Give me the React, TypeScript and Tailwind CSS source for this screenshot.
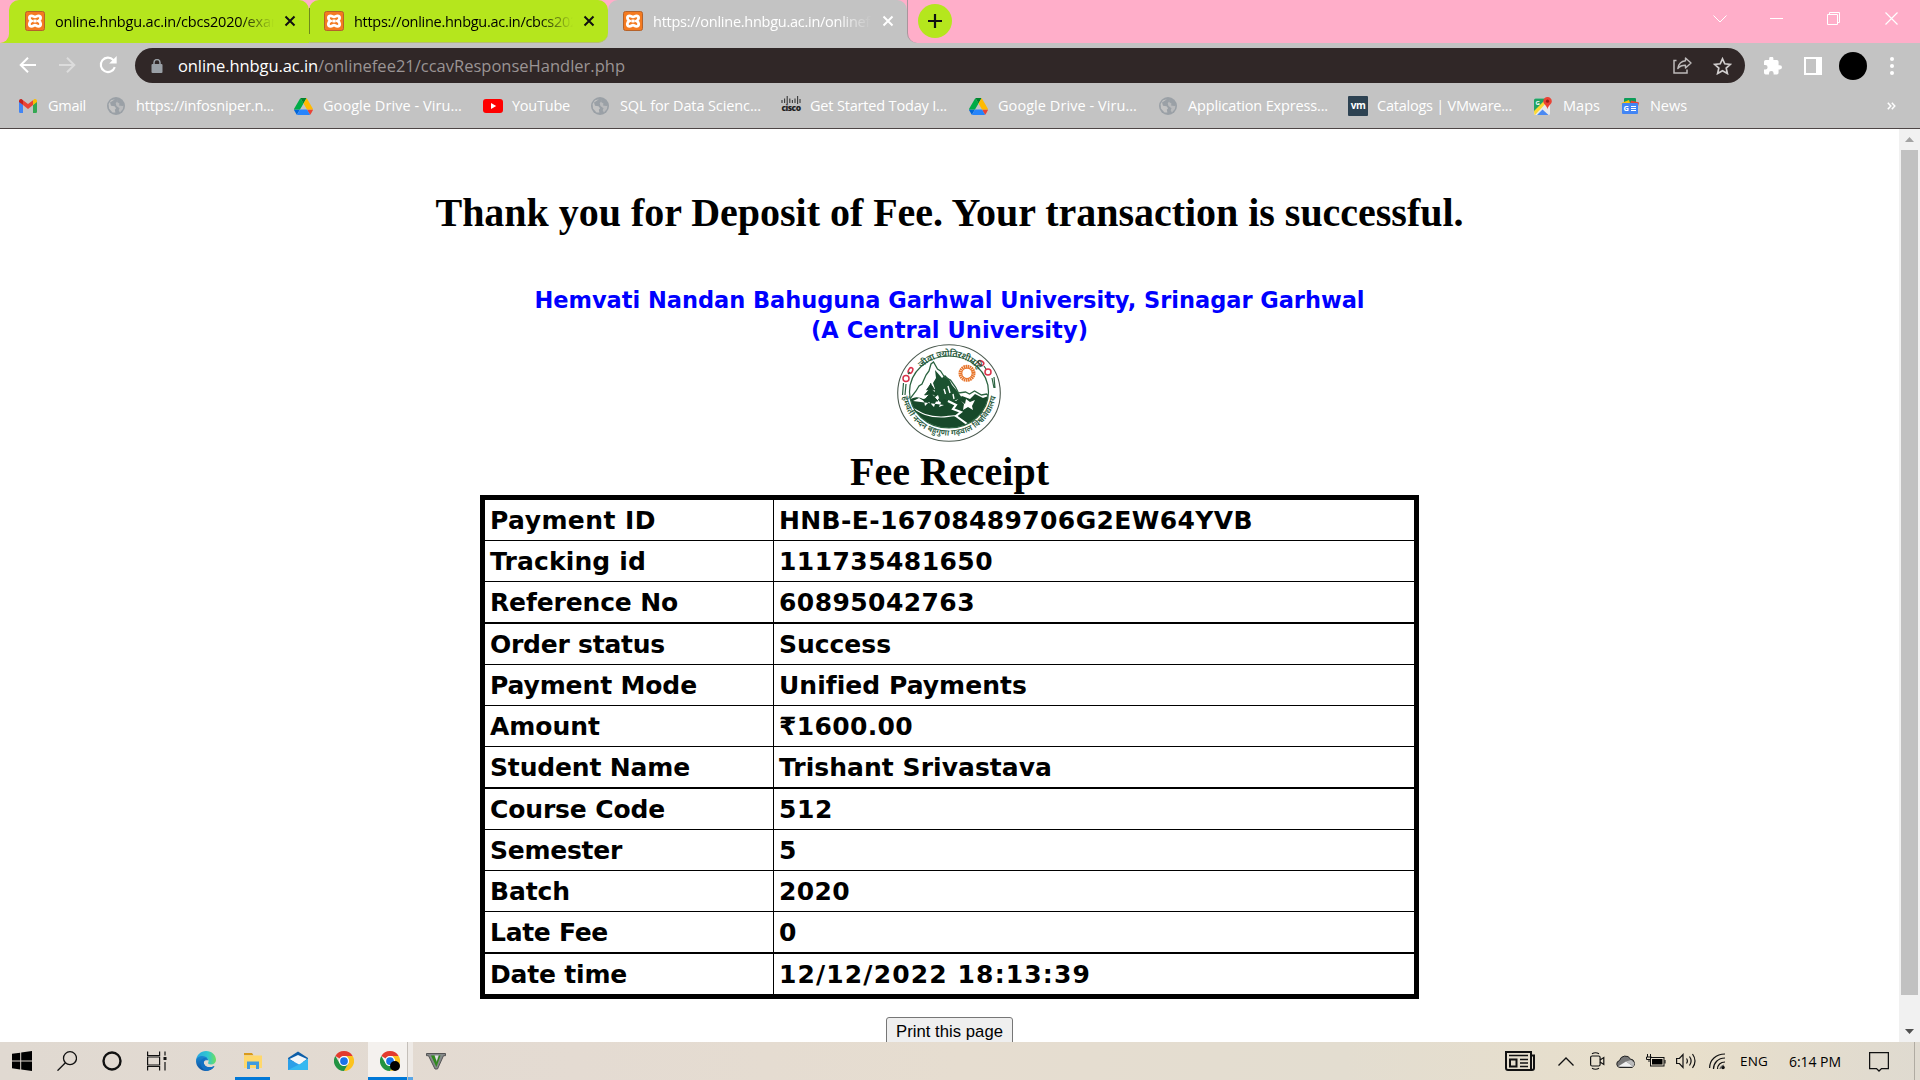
import { useLayoutEffect, useRef, useState, type ReactNode } from "react";

const UI = "font-['Open_Sans','Noto_Sans',sans-serif]";

/** A single line of text whose tracking is adjusted so that it spans `w` pixels. */
function Fit({ w, className = "", children }: { w: number; className?: string; children: string }) {
  const ref = useRef<HTMLSpanElement>(null);
  const [spacing, setSpacing] = useState(0);
  useLayoutEffect(() => {
    if (ref.current) {
      const natural = ref.current.getBoundingClientRect().width;
      setSpacing((w - natural) / children.length);
    }
  }, [w, children]);
  return (
    <span ref={ref} className={`inline-block shrink-0 whitespace-pre ${className}`} style={{ letterSpacing: `${spacing}px` }}>
      {children}
    </span>
  );
}

function Xampp() {
  return (
    <svg viewBox="0 0 20 20" className="size-5 shrink-0">
      <rect x="0.5" y="0.5" width="19" height="19" rx="2" fill="#f47a20" stroke="#b5622a" />
      <path
        d="M6.600 4.800c-1.700 0-2.200 1-2.200 2.200 0 1.500.9 2.400 2 3-1.200.6-2.100 1.500-2.100 3 0 1.400.8 2.300 2.300 2.300 1.700 0 2-1.100 3.400-1.100s1.700 1.100 3.400 1.100c1.500 0 2.300-.9 2.300-2.300 0-1.500-.9-2.400-2.100-3 1.100-.6 2-1.500 2-3 0-1.200-.5-2.200-2.200-2.200-1.500 0-2 1.100-3.400 1.100S8.100 4.800 6.600 4.800Z"
        fill="none"
        stroke="#fff"
        strokeWidth="2.800"
      />
      <path d="M8.500 10h3" stroke="#fff" strokeWidth="3" />
    </svg>
  );
}

function Cross({ color }: { color: string }) {
  return (
    <svg viewBox="0 0 12 12" className="size-3 shrink-0">
      <path d="M1.500 1.500 10.500 10.500M10.500 1.500 1.500 10.500" stroke={color} strokeWidth="2" />
    </svg>
  );
}

function TabBody({ title, w, dark, textBox }: { title: string; w: number; dark: boolean; textBox: string }) {
  return (
    <>
      <Xampp />
      <div className={`ml-[10px] overflow-hidden [mask-image:linear-gradient(90deg,#000_84%,transparent)] ${textBox}`}>
        <Fit w={w} className={dark ? "text-[14.500px] text-black" : "text-[14.500px] text-white"}>
          {title}
        </Fit>
      </div>
      <div className="ml-[10px] flex">
        <Cross color={dark ? "#111" : "#fff"} />
      </div>
    </>
  );
}

function Globe() {
  return (
    <svg viewBox="0 0 18 18" className="size-[18px]">
      <circle cx="9" cy="9" r="9" fill="#9aa0a6" />
      <path d="M8 2.200 3 5.500l1 3.200 3.500.6 1.600 2-1.300 1.500.6 2.800-2.900-.2L2 11.500 1.600 7 4 3.200Z" fill="#c3c3c3" />
      <path d="M11 1.800 10 5l2.500 1.500-.5 2L15.500 9l1-.5-.6 3.500-3 3.500-1.200-2.200.8-2L9.500 9l-.8-2.500 1.200-2Z" fill="#c3c3c3" opacity=".75" />
    </svg>
  );
}

function Drive() {
  return (
    <svg viewBox="0 0 87.300 78" className="h-[17px] w-[19px]">
      <path d="m6.600 66.850 3.850 6.650c.8 1.400 1.950 2.500 3.300 3.300l13.750-23.800H0c0 1.550.4 3.100 1.200 4.500z" fill="#0066da" />
      <path d="M43.650 25 29.900 1.200c-1.350.8-2.500 1.900-3.300 3.300L1.200 48.500A9 9 0 0 0 0 53h27.500z" fill="#00ac47" />
      <path d="M73.550 76.800c1.350-.8 2.500-1.900 3.300-3.300l1.600-2.750 7.650-13.250c.8-1.400 1.200-2.950 1.200-4.500H59.800l5.850 11.500z" fill="#ea4335" />
      <path d="M43.650 25 57.400 1.200C56.050.4 54.500 0 52.900 0H34.400c-1.600 0-3.150.45-4.500 1.200z" fill="#00832d" />
      <path d="M59.800 53H27.500L13.750 76.800c1.350.8 2.900 1.200 4.500 1.200h50.800c1.600 0 3.150-.45 4.500-1.200z" fill="#2684fc" />
      <path d="m73.400 26.500-12.700-22c-.8-1.400-1.950-2.500-3.300-3.300L43.650 25l16.150 28h27.450c0-1.550-.4-3.100-1.200-4.500z" fill="#ffba00" />
    </svg>
  );
}

function Gmail() {
  return (
    <svg viewBox="0 0 18 14" className="h-[14px] w-[18px]">
      <path d="M0 2v10.800A1.200 1.200 0 0 0 1.200 14H4V6Z" fill="#4285f4" />
      <path d="M18 2v10.800a1.200 1.200 0 0 1-1.200 1.200H14V6Z" fill="#34a853" />
      <path d="M4 1.200 9 5l5-3.800V6L9 9.900 4 6Z" fill="#ea4335" />
      <path d="M0 2C0 .4 1.800-.5 3.100.5L4 1.200V6L0 3Z" fill="#c5221f" />
      <path d="M18 2c0-1.600-1.800-2.500-3.100-1.500L14 1.200V6l4-3Z" fill="#fbbc04" />
    </svg>
  );
}

function YouTube() {
  return (
    <svg viewBox="0 0 20 14" className="h-[14px] w-5">
      <rect width="20" height="14" rx="3" fill="#f00" />
      <path d="M8 4v6l5.200-3Z" fill="#fff" />
    </svg>
  );
}

function Cisco() {
  return (
    <div className="mb-1 flex h-[16px] w-5 flex-col items-center">
      <svg viewBox="0 0 20 8" className="h-2 w-5">
        <path d="M1 4v3M3.600 2.500V7M6.200 0v8M8.800 2.500V7M11.400 4v3M14 2.500V7M16.600 0v8M19 3v4" stroke="#3a3a3a" strokeWidth="1.100" />
      </svg>
      <span className="font-['Open_Sans',sans-serif] text-[8.500px] leading-[7px] font-extrabold tracking-[-0.500px] text-[#222]">cisco</span>
    </div>
  );
}

function VMware() {
  return (
    <div className="flex h-5 w-5 items-center justify-center rounded-[1px] bg-[#2d4252]">
      <span className="-mt-[2px] text-[10px] leading-none font-bold tracking-[-0.500px] text-white">vm</span>
    </div>
  );
}

function Maps() {
  return (
    <svg viewBox="0 0 18 19" className="h-[19px] w-[18px]">
      <rect x="0" y="1.500" width="16" height="16.500" rx="1.500" fill="#e8eaed" />
      <path d="M0 3q0-1.500 1.500-1.500H13L0 15Z" fill="#1fa463" />
      <path d="M0 14 12 2l3 1L1 18H.5Z" fill="#fdd835" />
      <path d="m3 18 5.500-5.500L14.500 18Z" fill="#4a89f3" />
      <text x="1.500" y="8" fontSize="6" fontWeight="700" fill="#fff" fontFamily="Open Sans">G</text>
      <path d="M13.500 0A4.200 4.200 0 0 0 9.300 4.200c0 3 3.400 3.800 4.200 8 .8-4.200 4.300-5 4.300-8A4.200 4.200 0 0 0 13.500 0Z" fill="#ea4335" />
      <circle cx="13.500" cy="4.200" r="1.600" fill="#9c1f17" />
    </svg>
  );
}

function News() {
  return (
    <svg viewBox="0 0 18 16" className="h-4 w-[18px]">
      <rect x="3" y="0" width="12" height="8" rx="1" fill="#0c9d58" />
      <path d="M.5 5 8 2l2 6-8 3Z" fill="#ffc107" />
      <path d="m10 2.500 8 2-2 8-8-3Z" fill="#ea4335" />
      <rect x="1" y="5" width="16" height="11" rx="1" fill="#4285f4" />
      <text x="2.500" y="13" fontSize="7.500" fontWeight="700" fill="#fff" fontFamily="Open Sans">G</text>
      <path d="M10 8.500h5M10 10.500h5M10 12.500h5" stroke="#fff" strokeWidth="1" />
    </svg>
  );
}

const bookmarks: { icon: ReactNode; label: string; w: number; box: string }[] = [
  { icon: <Gmail />, label: "Gmail", w: 38, box: "w-[88px]" },
  { icon: <Globe />, label: "https://infosniper.n...", w: 138, box: "w-[187px]" },
  { icon: <Drive />, label: "Google Drive - Viru...", w: 139, box: "w-[189px]" },
  { icon: <YouTube />, label: "YouTube", w: 58, box: "w-[108px]" },
  { icon: <Globe />, label: "SQL for Data Scienc...", w: 141, box: "w-[190px]" },
  { icon: <Cisco />, label: "Get Started Today I...", w: 137, box: "w-[188px]" },
  { icon: <Drive />, label: "Google Drive - Viru...", w: 139, box: "w-[190px]" },
  { icon: <Globe />, label: "Application Express...", w: 140, box: "w-[189px]" },
  { icon: <VMware />, label: "Catalogs | VMware...", w: 135, box: "w-[186px]" },
  { icon: <Maps />, label: "Maps", w: 37, box: "w-[87px]" },
  { icon: <News />, label: "News", w: 37, box: "w-[87px]" },
];

function TabStrip() {
  return (
    <div className="flex h-[43px] bg-[#ffaec9]">
      <div className="w-[9px] bg-[#b5e61d]">
        <div className="h-full rounded-br-[9px] bg-[#ffaec9]" />
      </div>
      <div className="flex w-[300px] items-center rounded-t-[10px] bg-[#b5e61d] pb-[2px] pl-4">
        <TabBody title="online.hnbgu.ac.in/cbcs2020/exam" w={229} dark textBox="w-[219px]" />
      </div>
      <div className="w-[299px] bg-[linear-gradient(#ffaec9_50%,#c3c3c3_50%)]">
        <div className="flex h-full items-center rounded-t-[10px] rounded-br-[10px] border-b border-[#b5c070] bg-[#b5e61d] pb-px">
          <div className="h-[26px] w-px bg-[#6f8a1c]" />
          <div className="w-[14px]" />
          <TabBody title="https://online.hnbgu.ac.in/cbcs2020" w={232} dark textBox="w-[219px]" />
        </div>
      </div>
      <div className="flex w-[299px] items-center rounded-t-[10px] bg-[#c3c3c3] pb-[2px] pl-[15px]">
        <TabBody title="https://online.hnbgu.ac.in/onlinefe" w={225} dark={false} textBox="w-[219px]" />
      </div>
      <div className="flex-1 bg-[#c3c3c3]">
        <div className="flex h-full items-start rounded-bl-[10px] border-l border-[#a9959c] bg-[#ffaec9]">
          <div className="mt-1 ml-[10px] flex size-[34px] items-center justify-center rounded-full bg-[#b5e61d]">
            <svg viewBox="0 0 16 16" className="size-4">
              <path d="M8 1v14M1 8h14" stroke="#111" strokeWidth="2.200" />
            </svg>
          </div>
          <div className="mr-[22px] ml-auto flex h-[37px] items-center text-white">
            <svg viewBox="0 0 14 8" className="mr-[43px] h-2 w-[14px]">
              <path d="m.5.5 6.500 6.500L13.500.5" fill="none" stroke="currentColor" strokeWidth="1" />
            </svg>
            <div className="mr-[44px] h-px w-[13px] bg-white" />
            <svg viewBox="0 0 13 13" className="mr-[45px] size-[13px]">
              <path d="M.5 2.500h10v10H.5ZM2.500 2.500v-2h10v10h-2" fill="none" stroke="currentColor" />
            </svg>
            <svg viewBox="0 0 13 13" className="size-[13px]">
              <path d="m.5.5 12 12M12.500.5l-12 12" stroke="currentColor" strokeWidth="1.200" />
            </svg>
          </div>
        </div>
      </div>
    </div>
  );
}

function Toolbar() {
  return (
    <div className="flex h-[45px] items-center pl-[19px]">
      <svg viewBox="0 0 17 16" className="mb-[1px] h-4 w-[17px]">
        <path d="M17 8H2M9 .8 1.700 8 9 15.200" fill="none" stroke="#fff" strokeWidth="2" />
      </svg>
      <svg viewBox="0 0 17 16" className="mb-[1px] ml-[23px] h-4 w-[17px]">
        <path d="M0 8h15M8 .8 15.300 8 8 15.200" fill="none" stroke="#dcdcdc" strokeWidth="2" />
      </svg>
      <svg viewBox="0 0 18 18" className="mb-[1px] ml-[23px] size-[18px]">
        <path d="M15.800 11.200A7.200 7.200 0 1 1 14.300 4L16 5.800" fill="none" stroke="#fff" strokeWidth="2.100" />
        <path d="M17.700 0v7.500h-7.500Z" fill="#fff" />
      </svg>
      <div className="ml-[18px] flex h-[35px] w-[1610px] items-center rounded-full bg-[#302727] pl-4">
        <svg viewBox="0 0 12 14" className="h-[14px] w-3">
          <rect x="0.500" y="5" width="11" height="9" rx="1" fill="#9aa0a6" />
          <path d="M3 5.500V3.600a3 3 0 0 1 6 0v1.900" fill="none" stroke="#9aa0a6" strokeWidth="1.500" />
        </svg>
        <div className="ml-[15px] flex text-[16.500px] leading-[24px]">
          <Fit w={140} className="text-white">online.hnbgu.ac.in</Fit>
          <Fit w={307} className="text-[#9a9494]">/onlinefee21/ccavResponseHandler.php</Fit>
        </div>
        <svg viewBox="0 0 19 17" className="mr-[21px] ml-auto h-[17px] w-[19px] text-[#bdbaba]">
          <path d="M3.500 3.500H1V16h13v-3.500" fill="none" stroke="currentColor" strokeWidth="1.500" />
          <path d="M12.500 1 18 6l-5.500 5V8.300c-3.500 0-5.800.8-7.700 3.200C5.500 7.500 8 4.300 12.500 3.800Z" fill="none" stroke="currentColor" strokeWidth="1.400" strokeLinejoin="round" />
        </svg>
        <svg viewBox="0 0 19 18" className="mr-[13px] h-[18px] w-[19px]">
          <path d="m9.500 1.800 2.300 5 5.500.6-4.100 3.700 1.200 5.400-4.900-2.800-4.900 2.800 1.200-5.400L1.700 7.400l5.500-.6Z" fill="none" stroke="#d0cdcd" strokeWidth="1.700" />
        </svg>
      </div>
      <svg viewBox="2 2 21 20" className="ml-[19px] h-[18px] w-[18px]">
        <path d="M20.500 11H19V7a2 2 0 0 0-2-2h-4V3.500a2.500 2.500 0 0 0-5 0V5H4a2 2 0 0 0-2 2v3.800h1.500a2.700 2.700 0 0 1 0 5.400H2V20a2 2 0 0 0 2 2h3.800v-1.500a2.700 2.700 0 0 1 5.400 0V22H17a2 2 0 0 0 2-2v-4h1.500a2.500 2.500 0 0 0 0-5Z" fill="#fff" />
      </svg>
      <div className="ml-[22px] h-[18px] w-[18px] border-2 border-r-[6px] border-white" />
      <div className="ml-[17px] size-7 rounded-full bg-black" />
      <div className="ml-[23px] flex flex-col gap-[3px]">
        <div className="size-1 rounded-full bg-white" />
        <div className="size-1 rounded-full bg-white" />
        <div className="size-1 rounded-full bg-white" />
      </div>
    </div>
  );
}

function Bookmarks() {
  return (
    <div className="flex h-9 items-center pl-[19px] text-[14.500px] text-white">
      {bookmarks.map((b, i) => (
        <div key={i} className={`flex shrink-0 items-center ${b.box}`}>
          <div className="flex w-5 items-center">{b.icon}</div>
          <Fit w={b.w} className="ml-[9px]">{b.label}</Fit>
        </div>
      ))}
      <svg viewBox="0 0 9 8" className="mr-6 ml-auto h-2 w-[9px]">
        <path d="m.8.800 3 3.200-3 3.200M4.800.8l3 3.200-3 3.200" fill="none" stroke="#fff" strokeWidth="1.500" />
      </svg>
    </div>
  );
}

function Seal() {
  return (
    <svg viewBox="0 0 104 98" className="-mt-px mr-[2px] h-[98px] w-[104px] shrink-0">
      <defs>
        <clipPath id="inner"><ellipse cx="52" cy="48" rx="39.500" ry="36" /></clipPath>
        <path id="topArc" d="M15 49a37 35.500 0 0 1 74 0" transform="translate(0 -1)" />
        <path id="bottomArc" d="M4 42C6 108 98 108 100 42" />
      </defs>
      <ellipse cx="52" cy="49" rx="51.300" ry="48.300" fill="#fff" stroke="#4c5b50" strokeWidth="1.100" />
      <g clipPath="url(#inner)">
        <path d="M12 56c6-4 10-3 14-1l6-1 7 2 6-3 9 1 5 3 6-5 8 3 5-5 8 4 8-3v36H12Z" fill="#17492a" />
        <path d="m38 26 7 8 3-3 4 4 3 6 6 7 4 6-9 3-3 5-5-7-5 2-2-6-4 3 1-9-2-6 3-5Z" fill="#1b5230" />
        <path d="m47 45 1.500 5M51 42l2 7M56 50l1 5M40 55l3 5" stroke="#fff" strokeWidth="1.400" />
        <path d="m12 56 7-9 3-5 3-2 4-9 3-4 2-7 2.500-2 4 7 3 2 4 6 6 3 5 7 3 6 7-1 4 2 5-3 7 4 5-1 3 3" fill="none" stroke="#2b6340" strokeWidth="1.300" />
        <path d="m16 57 6-3 5 3 1 5 4-4 5 5 2-6 5 1-2 5 5-2M64 57l4 3 1-5 4 3 5-2-3 6 1 4-5-3-5 3 1-6Z" fill="#fff" />
        <path d="M33.700 39v22M33.700 40l-4 6 3-1-5 6 5-1-6 7h14l-6-7 5 1-5-6 3 1Z" fill="#17492a" stroke="#17492a" strokeWidth="1" />
        <path d="m51 57 8 4-3 4 8 3-5 4 18 13" fill="none" stroke="#fff" strokeWidth="2.100" />
        <path d="M14 63c10 6 16 10 30 10 7 0 10-2 16-1" fill="none" stroke="#fff" strokeWidth="1.200" />
      </g>
      <ellipse cx="52" cy="48" rx="39.500" ry="36" fill="none" stroke="#2b6340" strokeWidth="1.200" />
      <circle cx="70" cy="29.300" r="6.700" fill="#fff" stroke="#e8762c" strokeWidth="3.600" strokeDasharray="1.500 .5" />
      <circle cx="70" cy="29.300" r="5.200" fill="none" stroke="#e8762c" strokeWidth="1" />
      <g fill="none" stroke="#d8334a" strokeWidth="1.500">
        <circle cx="9" cy="34.500" r="3" />
        <ellipse cx="13.500" cy="26.500" rx="2" ry="3" transform="rotate(30 13.500 26.500)" />
        <ellipse cx="84" cy="19" rx="2" ry="3" transform="rotate(-60 84 19)" />
        <circle cx="91" cy="28" r="3" />
      </g>
      <path d="M6.500 39 5.500 51M9 40 8 51M95 34l2 10M97 33l1 11M11 30l2-2M87 22l2 3" stroke="#2b6340" strokeWidth="1.200" />
      <g fill="#24573a" fontFamily="'Noto Sans Devanagari','Noto Sans',sans-serif" fontWeight="600">
        <text fontSize="9"><textPath href="#topArc" startOffset="51%" textAnchor="middle" textLength="64">जीवा ज्योतिरशीमहि</textPath></text>
        <text fontSize="8"><textPath href="#bottomArc" startOffset="50%" textAnchor="middle" textLength="132">हेमवती नन्दन बहुगुणा गढ़वाल विश्वविद्यालय</textPath></text>
      </g>
    </svg>
  );
}

const rows: { label: string; lw: number; value: string; vw: number; cls: string }[] = [
  { label: "Payment ID", lw: 166, value: "HNB-E-16708489706G2EW64YVB", vw: 474, cls: "h-[41px] border-b" },
  { label: "Tracking id", lw: 156, value: "111735481650", vw: 214, cls: "h-[41px] border-b" },
  { label: "Reference No", lw: 188, value: "60895042763", vw: 196, cls: "h-[42px] border-b-2" },
  { label: "Order status", lw: 175, value: "Success", vw: 112, cls: "h-[41px] border-b" },
  { label: "Payment Mode", lw: 207, value: "Unified Payments", vw: 247, cls: "h-[41px] border-b" },
  { label: "Amount", lw: 110, value: "₹1600.00", vw: 134, cls: "h-[41px] border-b" },
  { label: "Student Name", lw: 200, value: "Trishant Srivastava", vw: 273, cls: "h-[42px] border-b-2" },
  { label: "Course Code", lw: 175, value: "512", vw: 54, cls: "h-[41px] border-b" },
  { label: "Semester", lw: 132, value: "5", vw: 18, cls: "h-[41px] border-b" },
  { label: "Batch", lw: 80, value: "2020", vw: 71, cls: "h-[41px] border-b" },
  { label: "Late Fee", lw: 118, value: "0", vw: 18, cls: "h-[42px] border-b-2" },
  { label: "Date time", lw: 137, value: "12/12/2022 18:13:39", vw: 312, cls: "h-[40px]" },
];

function Receipt() {
  return (
    <div className="flex h-[913px] bg-white">
      <main className="flex w-[1899px] flex-col items-center overflow-hidden text-black">
        <h1 className="mt-[61px] h-[46px] shrink-0 font-['Liberation_Serif','Times_New_Roman',serif] text-[40px] leading-[46px] font-bold">
          <Fit w={1028}>Thank you for Deposit of Fee. Your transaction is successful.</Fit>
        </h1>
        <div className="mt-[49px] flex shrink-0 flex-col items-center font-['DejaVu_Sans',Verdana,sans-serif] text-[22.500px] leading-[30px] font-bold text-[#00f]">
          <Fit w={830}>Hemvati Nandan Bahuguna Garhwal University, Srinagar Garhwal</Fit>
          <Fit w={277}>(A Central University)</Fit>
        </div>
        <Seal />
        <h2 className="mt-[7px] flex h-[46px] shrink-0 font-['Liberation_Serif','Times_New_Roman',serif] text-[40px] leading-[46px] font-bold">
          <Fit w={199}>Fee Receipt</Fit>
        </h2>
        <div className="w-[939px] shrink-0 border-[5px] border-black font-['DejaVu_Sans',Verdana,sans-serif] text-[25px] leading-[42px] font-bold">
          {rows.map((r) => (
            <div key={r.label} className={`flex border-black ${r.cls}`}>
              <div className="w-[289px] border-r border-black pl-[5px]">
                <Fit w={r.lw}>{r.label}</Fit>
              </div>
              <div className="pl-[5px]">
                <Fit w={r.vw}>{r.value}</Fit>
              </div>
            </div>
          ))}
        </div>
        <button className="mt-[18px] h-[28px] w-[127px] shrink-0 rounded-[3px] border border-[#767676] bg-[#efefef] font-['Liberation_Sans',Arial,sans-serif] text-[16.670px] leading-[25px]">
          <Fit w={107}>Print this page</Fit>
        </button>
      </main>
      <aside className="flex w-[21px] flex-col items-center bg-[#f1f1f1]">
        <div className="flex h-[21px] items-center">
          <svg viewBox="0 0 9 5" className="h-[5px] w-[9px]"><path d="M0 5 4.500 0 9 5Z" fill="#a3a3a3" /></svg>
        </div>
        <div className="h-[845px] w-[17px] bg-[#c1c1c1]" />
        <div className="mt-auto mb-[8px]">
          <svg viewBox="0 0 9 5" className="h-[5px] w-[9px]"><path d="M0 0 4.500 5 9 0Z" fill="#505050" /></svg>
        </div>
      </aside>
    </div>
  );
}

function Chrome() {
  return (
    <svg viewBox="0 0 48 48" className="size-5">
      <path d="M24 0a24 24 0 0 1 20.800 12H24a12 12 0 0 0-10.400 6L3.200 12A24 24 0 0 1 24 0Z" fill="#e33b2e" />
      <path d="M44.800 12A24 24 0 0 1 24 48l10.400-18A12 12 0 0 0 34.400 18L30 12Z" fill="#fcc31e" />
      <path d="M3.200 12 13.600 30a12 12 0 0 0 20.800 0L24 48A24 24 0 0 1 3.200 12Z" fill="#229342" />
      <circle cx="24" cy="24" r="12" fill="#fff" />
      <circle cx="24" cy="24" r="9.300" fill="#1a73e8" />
    </svg>
  );
}

function Taskbar() {
  return (
    <div className="flex h-[38px] items-center bg-[linear-gradient(90deg,#e0d9d1,#e4dbd2_30%,#e6ddd0_50%,#e3ddd0_70%,#e8dfcb_88%,#dfdad0)] pl-3">
      <svg viewBox="0 0 20 20" className="size-5">
        <path d="m0 2.800 8.200-1.100v7.900H0ZM9.200 1.500 20 0v9.600H9.200ZM0 10.500h8.200v7.900L0 17.300ZM9.200 10.500H20V20L9.200 18.500Z" />
      </svg>
      <svg viewBox="0 0 20 20" className="ml-[25px] size-5" fill="none" stroke="#111" strokeWidth="1.300">
        <circle cx="13" cy="7.200" r="6.500" /><path d="M8.400 11.800.5 19.700" />
      </svg>
      <svg viewBox="0 0 20 20" className="ml-[25px] size-5">
        <circle cx="10" cy="10" r="8.500" fill="none" stroke="#111" strokeWidth="2.400" />
      </svg>
      <svg viewBox="0 0 20 20" className="ml-[25px] size-5" fill="none" stroke="#111" strokeWidth="1.200">
        <path d="M.6.500v4h12v-4M.6 6h12v8H.6ZM.6 19.500v-4h12v4M18 .5v4M18 11v8.500" /><path d="M16.500 7.500h3" strokeWidth="3" />
      </svg>
      <svg viewBox="0 0 20 20" className="ml-[29px] size-5">
        <defs>
          <linearGradient id="edgeTop" x1="0" x2="1"><stop offset="0" stopColor="#2aa5e0" /><stop offset=".6" stopColor="#30c8d0" /><stop offset="1" stopColor="#6fe05a" /></linearGradient>
          <linearGradient id="edgeLow" x1="0" y1="0" x2="0" y2="1"><stop offset="0" stopColor="#1b8ad3" /><stop offset="1" stopColor="#0c4f9e" /></linearGradient>
        </defs>
        <path d="M0 9.500C.5 4 4.800 0 10 0c6 0 10 4.300 10 8.800 0 3-2.300 4.700-4.800 4.700-2.400 0-3.500-1-3-2 .9-1 .6-4.500-3.200-4.500Z" fill="url(#edgeTop)" />
        <path d="M0 10C.3 6.800 3.400 4.800 6.700 5c3 .2 5.300 2 5.500 4.300-4-.5-5 1.500-4 4 1.200 3 5.500 4 10.300 1.800C16.500 18.500 13.500 20 10 20 4.500 20 0 15.600 0 10Z" fill="url(#edgeLow)" />
        <path d="M8.200 13.300C7 11 8 8 10.500 7.500 8 6 4.500 8.500 4.700 12.500 5 16.500 7.500 19.500 11 19.900c3.300-.3 6-2 7.500-4.800-4.800 2.200-9.100 1.200-10.300-1.800Z" fill="#1270c4" />
      </svg>
      <div className="ml-[19px] flex h-full w-[35px] flex-col items-center">
        <svg viewBox="0 0 18 16" className="mt-[11px] h-4 w-[18px]">
          <path d="M0 0h8l1.500 2.300H0Z" fill="#d99a1c" />
          <path d="M0 2.500h18V15H0Z" fill="#ffd86b" />
          <path d="M3 16V8.500h12V16h-3v-4H6v4Z" fill="#3f9be0" />
        </svg>
        <div className="mt-auto h-[3px] w-full bg-[#0078d7]" />
      </div>
      <svg viewBox="0 0 20 20" className="ml-[18px] size-5">
        <path d="M0 7 10 .500 20 7v4H0Z" fill="#0d5ea8" />
        <path d="M1.500 8 10 4l9 4-8 6Z" fill="#f3f6f9" />
        <path d="M0 7.500 12 14l-8 5H0Z" fill="#2c9fe8" />
        <path d="M20 7.500V19H0L12 13Z" fill="#35b8f1" />
      </svg>
      <div className="ml-[26px]"><Chrome /></div>
      <div className="ml-[14px] flex h-full w-10 flex-col items-center border-r border-[#c4bfb9] bg-[#f4f1ee]">
        <div className="relative mt-[9px] ml-1">
          <Chrome />
          <div className="absolute right-0 bottom-0 size-[10px] rounded-full bg-black" />
        </div>
        <div className="mt-auto h-[3px] w-full bg-[#0078d7]" />
      </div>
      <div className="flex h-full w-[5px] flex-col bg-[#eeeae6]"><div className="mt-auto h-[3px] bg-[#5aa6e6]" /></div>
      <svg viewBox="0 0 20 17" className="ml-[13px] h-[17px] w-5">
        <path d="M.5.500h19v2.200h-2L11.500 16H9L2.500 2.700h-2Z" fill="#85898a" stroke="#555" />
        <path d="M5 2.500h4l1.500 7L13 2.500h1.500L10.400 14Z" fill="#2f8a1c" />
        <path d="M8.500 2.500h4L10.700 8Z" fill="#dfe4df" />
      </svg>

      <div className="ml-auto flex h-full items-center text-black">
        <svg viewBox="0 0 30 20" className="h-5 w-[30px]" fill="none" stroke="#111" strokeWidth="1.600">
          <path d="M1 1h25v18H3a2 2 0 0 1-2-2ZM26 4.500h3V17a2 2 0 0 1-2 2h-2" strokeWidth="2" />
          <path d="M4 4.500h19M15 8.500h8M15 12h8M15 15.500h8" /><path d="M5 8.500h6.500v7H5Z" strokeWidth="2" />
        </svg>
        <svg viewBox="0 0 16 9" className="ml-[23px] h-[9px] w-4"><path d="m.5 8.500 7.500-7.500 7.500 7.500" fill="none" stroke="#111" strokeWidth="1.300" /></svg>
        <svg viewBox="0 0 15 18" className="ml-4 h-[18px] w-[15px]" fill="none" stroke="#111" strokeWidth="1.200">
          <rect x=".6" y="4" width="9.500" height="10" rx="1.500" /><path d="m10 8 3.800-2.500v7L10 10M2 1.800Q5.500-.3 9 1.800M2 16.200q3.500 2.100 7 0" />
        </svg>
        <svg viewBox="0 0 20 13" className="ml-[11px] h-[13px] w-5">
          <path d="M4 12.500A3.500 3.500 0 0 1 3.500 5.600 6 6 0 0 1 14.500 4a4.500 4.500 0 0 1 1.500 8.500Z" fill="#777" stroke="#222" />
          <path d="M2 11.500 10 6.500l7.500 5.200Z" fill="#eee" /><path d="M10 6.500 15 5l3.500 3-1 3.500Z" fill="#bbb" />
        </svg>
        <svg viewBox="0 0 20 14" className="ml-[10px] h-[14px] w-5">
          <path d="M1.500 0v3M4.500 0v3M.5 3h5v2.500h-5ZM3 5.500V8" fill="none" stroke="#111" />
          <rect x="4.500" y="3.500" width="13.500" height="8.500" fill="#e6ddcb" stroke="#111" /><rect x="6" y="5" width="10.500" height="5.500" /><path d="M18.500 6h1v3.500h-1Z" />
        </svg>
        <svg viewBox="0 0 20 18" className="ml-[10px] h-[18px] w-5" fill="none" stroke="#111" strokeWidth="1.200">
          <path d="M.6 6.500h2.800L7 2.500v13l-3.600-4H.6ZM10.500 6.500q1.800 2.500 0 5M13.500 4.500q3.200 4.500 0 9M16.500 2q5 7 0 14" />
        </svg>
        <svg viewBox="0 0 17 17" className="ml-[13px] h-[17px] w-[17px]" fill="none" stroke="#111" strokeWidth="1.200">
          <path d="M.6 15C.6 7 7 1 16 1M4.500 16C4.500 10 9 5 16 5M8.500 16c0-4 3-7 7.500-7" /><circle cx="14" cy="14.500" r="1.200" fill="#111" />
          <path d="M11 16q.5-3 4-4" stroke="#666" />
        </svg>
        <Fit w={28} className="ml-[14px] text-[13.500px]">ENG</Fit>
        <Fit w={52} className="ml-[21px] text-[14px]">6:14 PM</Fit>
        <svg viewBox="0 0 20 20" className="mt-[1px] ml-[28px] size-5">
          <path d="M.6.600h18.800v16h-6.900L10 19l-2.500-2.400H.6Z" fill="none" stroke="#111" strokeWidth="1.300" />
        </svg>
        <div className="mr-[5px] ml-[25px] h-full w-px bg-[#b0aba2]" />
      </div>
    </div>
  );
}

export default function App() {
  return (
    <div className={`h-[1080px] w-[1920px] overflow-hidden bg-[#c3c3c3] ${UI}`}>
      <TabStrip />
      <div className="h-[85px]">
        <Toolbar />
        <Bookmarks />
      </div>
      <div className="h-px bg-[#4d4545]" />
      <Receipt />
      <Taskbar />
    </div>
  );
}
